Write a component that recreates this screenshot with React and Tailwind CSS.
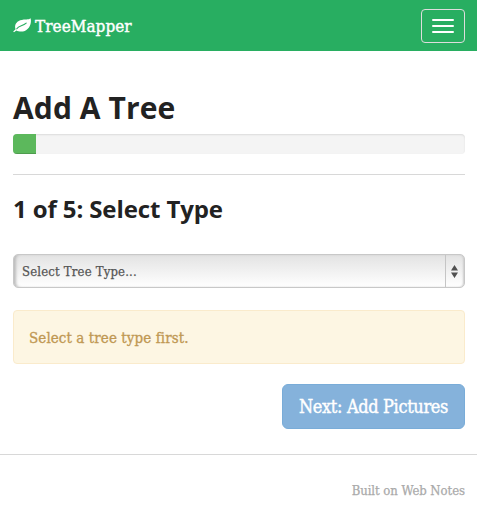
import React from 'react';

const serif = "font-['DejaVu_Serif_Condensed','DejaVu_Serif',serif] [font-stretch:condensed]";

function Leaf() {
  return (
    <svg width="19" height="15" viewBox="0 0 19 15" fill="none">
      <path d="M17.6.3C16.4 1.5 14.8 1.4 12.6 1.4 7.4 1.4 3.1 3.4 2.2 7.4 1.9 8.9 2.2 10.2 2.6 11.2L.2 13.4 1 14.3 3.4 12.5C5.2 13.4 8.6 14.2 11.8 12.9 16.4 11 18.9 5.4 17.6.3Z" fill="#fff" />
      <path d="M3.8 10.8C5.8 7.6 9.7 8.3 13.2 5.1" stroke="#28ae61" strokeWidth="1.1" strokeLinecap="round" />
    </svg>
  );
}

function Navbar() {
  return (
    <nav className="flex h-[51px] items-center justify-between bg-[#28ae61] pr-3 pl-[13px] text-white">
      <a className="flex items-center gap-[3px]">
        <Leaf />
        <span className={`${serif} text-[17px] leading-5 tracking-[0.03px] whitespace-nowrap [-webkit-text-stroke:0.4px]`}>TreeMapper</span>
      </a>
      <button aria-label="Menu" className="flex h-[34px] w-11 flex-col items-center justify-center gap-1 rounded border border-[#ddd]">
        <span className="h-0.5 w-[22px] rounded-[1px] bg-white" />
        <span className="h-0.5 w-[22px] rounded-[1px] bg-white" />
        <span className="h-0.5 w-[22px] rounded-[1px] bg-white" />
      </button>
    </nav>
  );
}

function TypeSelect() {
  return (
    <div role="combobox" aria-expanded="false" className="mt-[29px] flex h-[34px] overflow-hidden rounded-[5px] border border-[#c8c8c8] bg-linear-to-b from-[#e3e3e3] to-white shadow-[inset_3px_0_3px_-1px_#bbb,inset_-2px_0_2px_-1px_#ccc]">
      <span className={`${serif} flex-1 pl-2 text-[13px] leading-[33px] tracking-[0.18px] text-[#555] [-webkit-text-stroke:0.25px]`}>Select Tree Type...</span>
      <span className="flex w-[19px] items-center justify-center border-l border-[#c5c5c5] pr-px">
        <svg width="7" height="13" viewBox="0 0 7 13" fill="#505050">
          <path d="M3.5 0 7 5.5H0zM0 7.5h7L3.5 13z" />
        </svg>
      </span>
    </div>
  );
}

export default function App() {
  return (
    <div className="h-[517px] overflow-hidden bg-white text-[#222]">
      <Navbar />
      <main className="pt-[39px] pr-3 pl-[13px] font-['Open_Sans',sans-serif]">
        <h1 className="h-11 text-[30px] leading-[36px] font-bold tracking-[0.1px] whitespace-nowrap">Add A Tree</h1>
        <div className="h-5 overflow-hidden rounded bg-[#f4f4f4] shadow-[inset_0_1px_2px_rgba(0,0,0,0.1)]">
          <div className="h-full w-[23px] bg-[#5cb85c] shadow-[inset_0_-1px_0_rgba(0,0,0,0.15)]" />
        </div>
        <hr className="mt-5 border-[#d8d8d8]" />
        <h2 className="mt-[21px] h-[29px] text-[24px] leading-[26px] font-bold tracking-[-0.11px] whitespace-nowrap">1 of 5: Select Type</h2>
        <TypeSelect />
        <div className={`${serif} mt-[22px] h-[54px] rounded border border-[#faebcc] bg-[#fdf6e3] px-[15px] text-[15px] leading-[54px] tracking-[0.08px] text-[#c09853] [-webkit-text-stroke:0.3px]`}>
          Select a tree type first.
        </div>
        <div className="mt-5 flex justify-end">
          <button className={`${serif} h-[45px] w-[183px] rounded-md border border-[#79acd8] bg-[#85b2db] text-[18px] leading-[42px] tracking-[-0.35px] whitespace-nowrap text-white [-webkit-text-stroke:0.4px]`}>
            Next: Add Pictures
          </button>
        </div>
      </main>
      <footer className={`${serif} mt-[25px] border-t border-[#d8d8d8] pt-[26px] pr-3 text-right text-[13px] leading-5 tracking-[-0.05px] text-[#aaa] [-webkit-text-stroke:0.25px]`}>
        Built on Web Notes
      </footer>
    </div>
  );
}
